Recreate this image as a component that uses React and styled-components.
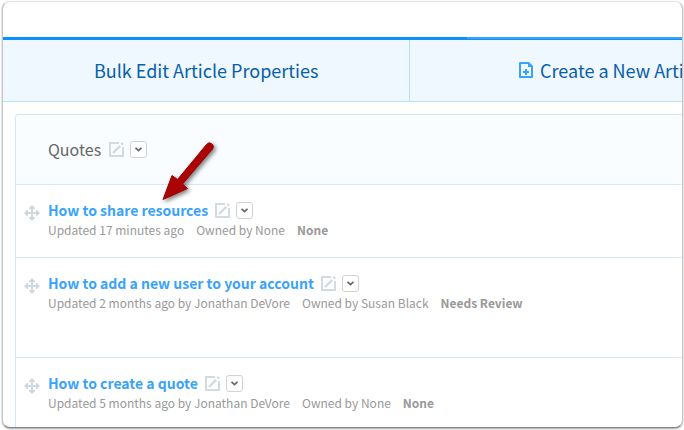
import React from "react";
import styled, { createGlobalStyle } from "styled-components";

const GlobalStyle = createGlobalStyle`
  *, *::before, *::after { box-sizing: border-box; }
  body {
    margin: 0;
    background: #fff;
    font-family: "Source Sans Pro", "Noto Sans CJK JP", "Noto Sans", sans-serif;
    font-size: 12px;
    color: #999;
  }
  button { font: inherit; cursor: pointer; }
`;

const Page = styled.div`
  min-height: 100vh;
  padding: 1px 1px 2px 2px;
  display: flex;
`;

const Window = styled.main`
  position: relative;
  flex: 1;
  min-width: 0;
  display: flex;
  flex-direction: column;
  overflow: hidden;
  background: #fff;
  border: 1px solid #c4c4c4;
  border-top-color: #e4e4e4;
  border-bottom-color: #858585;
  border-radius: 8px;
  box-shadow: 0 1px 2px rgba(0, 0, 0, 0.35);
`;

const TopBar = styled.header`
  flex: none;
  height: 38px;
  border-bottom: 3px solid #0a8fff;
  position: relative;

  &::after {
    content: "";
    position: absolute;
    top: 100%;
    left: 464px;
    right: 0;
    height: 2px;
    background: #38a3fc;
  }
`;

const Actions = styled.nav`
  flex: none;
  display: flex;
  overflow: hidden;
  border-bottom: 1px solid #bcdff5;
  background: #eff7ff;
`;

const Action = styled.button`
  flex: 0 0 60%;
  height: 61px;
  padding: 0 0 2px;
  display: flex;
  align-items: center;
  justify-content: center;
  gap: 7px;
  border: 0;
  border-right: 1px solid #b5dff8;
  background: none;
  color: #0760a8;
  font-size: 18px;
  line-height: 24px;
  white-space: nowrap;
`;

const Panel = styled.section`
  flex: 1;
  margin: 12px 0 0 12px;
  border: 1px solid #cfe8fa;
  border-width: 1px 0 0 1px;
  border-radius: 4px 0 0 0;
  overflow: hidden;
`;

const PanelHeader = styled.div`
  height: 70px;
  padding-left: 32px;
  display: flex;
  align-items: center;
  gap: 6px;
  background: #f9fdff;
  border-bottom: 1px solid #d2e9f9;
`;

const PanelTitle = styled.h2`
  margin: 0 2px 0 0;
  padding-bottom: 2px;
  color: #666;
  font-size: 16px;
  font-weight: 400;
  line-height: 24px;
`;

const List = styled.ul`
  margin: 0;
  padding: 0;
  list-style: none;
`;

const Row = styled.li`
  display: flex;
  align-items: flex-start;
  gap: 8px;
  min-height: ${(p) => (p.$tall ? 100 : 73)}px;
  padding: 15px 0 0 8px;
  border-bottom: 1px solid #d8e8f3;

  &:last-child { min-height: 0; border-bottom: 0; }
`;

const Handle = styled.button`
  width: 16px;
  height: 16px;
  margin-top: 5px;
  padding: 0;
  border: 0;
  background: none;
  svg { display: block; }
`;

const TitleLine = styled.div`
  display: flex;
  align-items: center;
  gap: 6px;
  height: 20px;
`;

const Title = styled.a`
  margin-right: 1px;
  color: #38a3fc;
  font-size: 14px;
  font-weight: 700;
  line-height: 20px;
  text-decoration: none;
  white-space: nowrap;
`;

const Meta = styled.div`
  display: flex;
  gap: 12px;
  line-height: 20px;
  white-space: nowrap;
`;

const IconButton = styled.button`
  width: 15px;
  height: 15px;
  padding: 0;
  border: 0;
  background: none;
  svg { display: block; }
`;

const MenuButton = styled.button`
  width: 17px;
  height: 17px;
  padding: 0;
  display: grid;
  place-items: center;
  background: #fff;
  border: 1px solid #d0d3d6;
  border-radius: 3px;
`;

const Arrow = styled.svg`
  position: absolute;
  left: 150px;
  top: 132px;
  pointer-events: none;
  filter: drop-shadow(2px 2px 2px rgba(0, 0, 0, 0.5));
`;

const Tools = ({ name }) => (
  <>
    <IconButton aria-label={`Edit ${name}`}>
      <svg width="15" height="15" viewBox="0 0 15 15" fill="none" stroke="#d2dbe2">
        <path d="M10 1H1v13h13V5" strokeWidth="2" />
        <path d="M4 11l7.2-7.2" strokeWidth="2.4" />
        <path d="M12.400 2.600l1.500-1.500" strokeWidth="2.800" />
      </svg>
    </IconButton>
    <MenuButton aria-label={`Options for ${name}`}>
      <svg width="7" height="5" viewBox="0 0 7 5" fill="none" stroke="#666" strokeWidth="1.8">
        <path d="M.5 .8l3 2.8 3-2.8" />
      </svg>
    </MenuButton>
  </>
);

const MoveIcon = () => (
  <svg width="16" height="16" viewBox="0 0 16 16" fill="#cfd8df">
    <path d="M8 0l3 3v1H9v3h3V5h1l3 3-3 3h-1V9H9v3h2v1l-3 3-3-3v-1h2V9H4v2H3L0 8l3-3h1v2h3V4H5V3z" />
  </svg>
);

const FileIcon = () => (
  <svg width="14" height="16" viewBox="0 0 14 16">
    <path fillRule="evenodd" fill="#38a3fc" d="M1 0h9l4 4v11a1 1 0 0 1-1 1H1a1 1 0 0 1-1-1V1a1 1 0 0 1 1-1zM2 2v12h10V5H9V2zM6 7h2v2h2v2H8v2H6v-2H4V9h2z" />
  </svg>
);

const articles = [
  { title: "How to share resources", updated: "Updated 17 minutes ago", owner: "Owned by None", status: "None" },
  { title: "How to add a new user to your account", updated: "Updated 2 months ago by Jonathan DeVore", owner: "Owned by Susan Black", status: "Needs Review", tall: true },
  { title: "How to create a quote", updated: "Updated 5 months ago by Jonathan DeVore", owner: "Owned by None", status: "None" },
];

export default function App() {
  return (
    <Page>
      <GlobalStyle />
      <Window>
        <TopBar />
        <Actions>
          <Action>Bulk Edit Article Properties</Action>
          <Action><FileIcon />Create a New Article</Action>
        </Actions>
        <Panel>
          <PanelHeader>
            <PanelTitle>Quotes</PanelTitle>
            <Tools name="Quotes" />
          </PanelHeader>
          <List>
            {articles.map((a) => (
              <Row key={a.title} $tall={a.tall}>
                <Handle aria-label={`Move ${a.title}`}><MoveIcon /></Handle>
                <div>
                  <TitleLine>
                    <Title href="#">{a.title}</Title>
                    <Tools name={a.title} />
                  </TitleLine>
                  <Meta>
                    <span>{a.updated}</span>
                    <span>{a.owner}</span>
                    <strong>{a.status}</strong>
                  </Meta>
                </div>
              </Row>
            ))}
          </List>
        </Panel>
        <Arrow width="66" height="72" viewBox="0 0 66 72" aria-hidden="true">
          <path fill="#ac0404" stroke="#9c0000" strokeWidth="1" d="M10 65.500L19 41.500l5.500 4L53.500 10.500a3.600 3.600 0 0 1 6 4.500L29.500 50l5 4.500z" />
        </Arrow>
      </Window>
    </Page>
  );
}
